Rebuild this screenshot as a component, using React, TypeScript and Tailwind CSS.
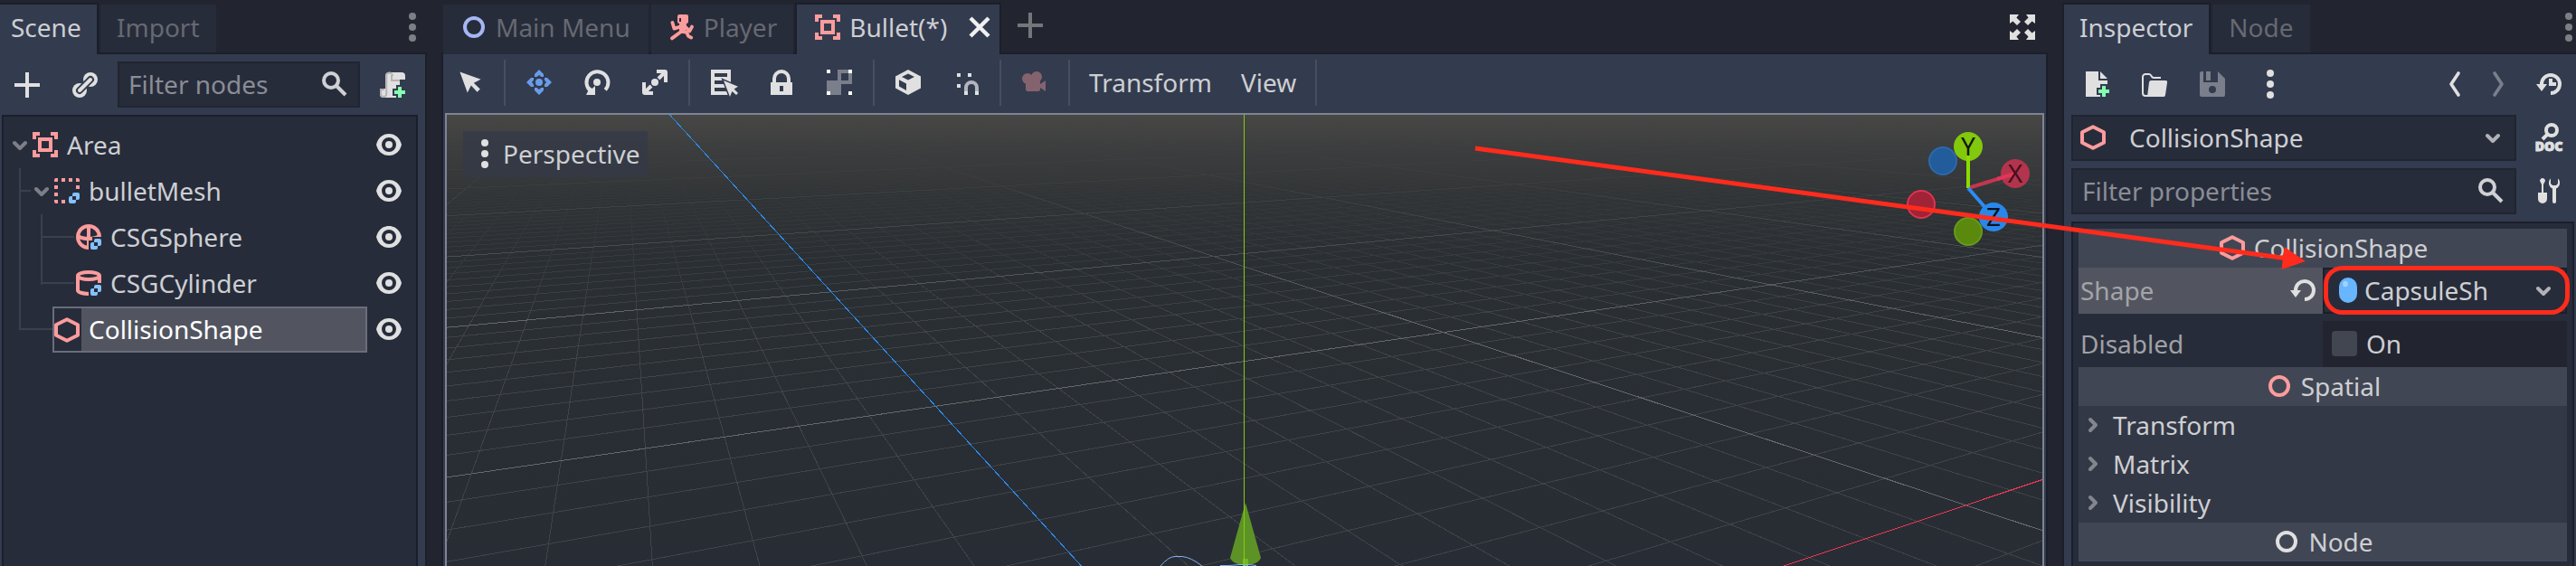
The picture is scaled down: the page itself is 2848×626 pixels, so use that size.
import type { ReactNode } from "react";

const LIGHT = "#e0e0e0";
const PINK = "#fc9c9c";
const BLUE = "#84c2ff";
const GREEN = "#84ffb1";

function Icon({ children, className = "" }: { children: ReactNode; className?: string }) {
  return (
    <svg viewBox="0 0 16 16" aria-hidden="true" className={`size-8 shrink-0 ${className}`}>
      {children}
    </svg>
  );
}

/* ---------- icons ---------- */

const AddIcon = ({ color = LIGHT }: { color?: string }) => (
  <Icon>
    <path d="M7 1v6H1v2h6v6h2V9h6V7H9V1z" fill={color} />
  </Icon>
);

const LinkIcon = () => (
  <Icon>
    <circle cx="11" cy="5" r="4" fill={LIGHT} />
    <circle cx="5" cy="11" r="4" fill={LIGHT} />
    <path d="M5 11l6-6" stroke="#333b4f" strokeWidth="4" strokeLinecap="round" />
    <path d="M5 11l6-6" stroke={LIGHT} strokeWidth="2" strokeLinecap="round" />
  </Icon>
);

const SearchIcon = () => (
  <Icon>
    <circle cx="6" cy="6" r="4" fill="none" stroke="#cfd0d3" strokeWidth="2" />
    <path d="M9 9l5 5" stroke="#cfd0d3" strokeWidth="2" />
  </Icon>
);

const PlusBadge = () => (
  <>
    <path d="M12 8v8M8 12h8" stroke="#333b4f" strokeWidth="4" />
    <path d="M12 9v6M9 12h6" stroke={GREEN} strokeWidth="2" />
  </>
);

const ScriptCreateIcon = () => (
  <Icon>
    <path d="M6 1h7a2 2 0 0 1 2 2v2h-3v10H3a2 2 0 0 1-2-2v-3h3V3a2 2 0 0 1 2-2z" fill={LIGHT} />
    <path
      d="M8 3a1.500 1.500 0 0 0-3.400 0v10a1.500 1.500 0 0 1-3.100 0v-2.500h2M7.500 2.500v3H12"
      fill="none"
      stroke="#b4b4b4"
      strokeWidth="1"
    />
    <PlusBadge />
  </Icon>
);

const EyeIcon = () => (
  <Icon>
    <path
      fillRule="evenodd"
      d="M8 2C4.400 2 1.900 4.400 1 8c.9 3.600 3.400 6 7 6s6.100-2.400 7-6c-.9-3.600-3.400-6-7-6zm0 2a4 4 0 1 1 0 8 4 4 0 0 1 0-8z"
      fill={LIGHT}
    />
    <circle cx="8" cy="8" r="2" fill={LIGHT} />
  </Icon>
);

const AreaIcon = () => (
  <Icon>
    <path
      d="M1 1v4h2V3h2V1zM11 1v2h2v2h2V1zM1 11v4h4v-2H3v-2zM13 11v2h-2v2h4v-4z"
      fill={PINK}
    />
    <path d="M5 5h6v6H5z" fill="none" stroke={PINK} strokeWidth="2" />
  </Icon>
);

const CsgBadge = () => (
  <>
    <path d="M10 8h6v8H8v-6h2z" fill="#272c3b" />
    <path
      fillRule="evenodd"
      d="M12 9a1 1 0 0 0-1 1v1h-1a1 1 0 0 0-1 1v2a1 1 0 0 0 1 1h2a1 1 0 0 0 1-1v-1h1a1 1 0 0 0 1-1v-2a1 1 0 0 0-1-1zm-1 2h2v2h-2z"
      fill={BLUE}
    />
  </>
);

const CombinerIcon = () => (
  <Icon>
    <path
      d="M2 1a1 1 0 0 0-1 1v1h2V1zM5 1h2v2H5zM9 1h2v2H9zM13 1v2h2V2a1 1 0 0 0-1-1zM1 5h2v2H1zM13 5h2v2h-2zM1 9h2v2H1zM1 13v1a1 1 0 0 0 1 1h1v-2zM5 13h2v2H5z"
      fill={PINK}
    />
    <CsgBadge />
  </Icon>
);

const SphereIcon = () => (
  <Icon>
    <g fill="none" stroke={PINK} strokeWidth="2">
      <circle cx="8" cy="8" r="6" />
      <path d="M8 2v12M2 7.500c3 2 9 2 12 0" />
    </g>
    <CsgBadge />
  </Icon>
);

const CylinderIcon = () => (
  <Icon>
    <g fill="none" stroke={PINK} strokeWidth="2">
      <ellipse cx="8" cy="4" rx="6" ry="2" />
      <path d="M2 4v8c0 1 2.500 2 6 2s6-1 6-2V4" />
    </g>
    <CsgBadge />
  </Icon>
);

const ShapeIcon = () => (
  <Icon>
    <path
      d="M8 2.150L14 5.100v5.800L8 13.850 2 10.900V5.100z"
      fill="none"
      stroke={PINK}
      strokeWidth="2"
      strokeLinejoin="round"
    />
  </Icon>
);

const RingIcon = ({ color }: { color: string }) => (
  <Icon>
    <circle cx="8" cy="8" r="5" fill="none" stroke={color} strokeWidth="2" />
  </Icon>
);

const RunnerIcon = () => (
  <Icon>
    <path
      fillRule="evenodd"
      d="M6.500 1h4a1 1 0 0 1 1 1v3a1 1 0 0 1-1 1h-4a1 1 0 0 1-1-1V2a1 1 0 0 1 1-1zm0 2v2h1V3z"
      fill={PINK}
    />
    <g stroke={PINK} strokeWidth="1.900" fill="none" strokeLinecap="round" strokeLinejoin="round">
      <path d="M2.700 5.500l1 3.300 3.300-1M9.500 7.500l2.700 2.700 1.300-2.400" />
      <path d="M7.500 10.500l-5 3.700M8.500 10.600l2 .2 1 2.100 1.600.9" />
    </g>
    <path d="M6.500 6h4l-.5 5-3.500.5z" fill={PINK} />
  </Icon>
);

const DotsIcon = ({ color = LIGHT }: { color?: string }) => (
  <Icon>
    <g fill={color}>
      <circle cx="8" cy="2" r="2" />
      <circle cx="8" cy="8" r="2" />
      <circle cx="8" cy="14" r="2" />
    </g>
  </Icon>
);

const ChevronDown = ({ color = "#7c7f88", className = "" }: { color?: string; className?: string }) => (
  <svg viewBox="4 0 8 16" aria-hidden="true" className={`h-8 w-4 shrink-0 ${className}`}>
    <path
      d="M5 7l3 3 3-3"
      fill="none"
      stroke={color}
      strokeWidth="2"
      strokeLinecap="round"
      strokeLinejoin="round"
    />
  </svg>
);

const ChevronRight = () => (
  <Icon>
    <path
      d="M6.500 5l3 3-3 3"
      fill="none"
      stroke="#83868e"
      strokeWidth="2"
      strokeLinecap="round"
      strokeLinejoin="round"
    />
  </Icon>
);

const SelectIcon = () => (
  <Icon>
    <path d="M2.200 2.200l4.200 11.600 2-4 3.400 3.600 1.600-1.600-3.500-3.400 3.900-2z" fill={LIGHT} />
  </Icon>
);

const MoveIcon = () => (
  <Icon>
    <g fill="#699ce8">
      <circle cx="8" cy="8" r="2" />
      <path d="M8 1L5.500 3.500V5h1.300L8 4l1.200 1h1.300V3.500zM8 15l-2.500-2.500V11h1.300L8 12l1.200-1h1.300v1.500zM1 8l2.500-2.500H5v1.300L4 8l1 1.200v1.300H3.500zM15 8l-2.500-2.500H11v1.300L12 8l-1 1.200v1.300h1.500z" />
    </g>
  </Icon>
);

const RotateIcon = () => (
  <Icon>
    <circle cx="8" cy="8" r="2" fill={LIGHT} />
    <path d="M12.600 12.200A6 6 0 1 0 4.500 12.800" fill="none" stroke={LIGHT} strokeWidth="2" />
    <path d="M2 15h5v-5l-1.700 1.500-2-1.500-.3 3z" fill={LIGHT} />
  </Icon>
);

const ScaleIcon = () => (
  <Icon>
    <circle cx="8" cy="8" r="2" fill={LIGHT} />
    <g fill="none" stroke={LIGHT} strokeWidth="2">
      <path d="M9 2h4.500a.5.5 0 0 1 .5.5V8M14 2l-4 4" />
      <path d="M7 14H2.500a.5.5 0 0 1-.5-.5V8M2 14l4-4" />
    </g>
  </Icon>
);

const ListSelectIcon = () => (
  <Icon>
    <path fillRule="evenodd" d="M1 1v14h11V1zm2 2h7v2H3zm0 4h7v2H3zm0 4h7v2H3z" fill={LIGHT} />
    <path
      d="M8 7l3.500 9 1.200-3 2.300 2 1-1-2.200-2.200L16 10.400z"
      fill={LIGHT}
      stroke="#333b4f"
      strokeWidth="1.500"
      paintOrder="stroke"
    />
  </Icon>
);

const LockIcon = () => (
  <Icon>
    <path d="M4 9V6a4 4 0 0 1 8 0v3" fill="none" stroke={LIGHT} strokeWidth="2" />
    <path fillRule="evenodd" d="M2 8h12v7H2zm5 2v3h2v-3z" fill={LIGHT} />
  </Icon>
);

const GroupIcon = () => (
  <Icon>
    <path fillRule="evenodd" d="M7 1h8v8H9v6H1V7h6zm2 2v4h4V3z" fill="#7b7f8b" />
    <path d="M1 1h2v2H1zM13 1h2v2h-2zM1 13h2v2H1zM13 13h2v2h-2z" fill="#fff" />
  </Icon>
);

const CubeIcon = () => (
  <Icon>
    <path
      fillRule="evenodd"
      d="M8 1l7 3.700v6.600L8 15l-7-3.700V4.700zm0 2.200L4.500 5 8 6.800 11.500 5zM3 6.600v3.700l4 2.200V8.700z"
      fill={LIGHT}
    />
  </Icon>
);

const SnapIcon = () => (
  <Icon>
    <path d="M3 3h2v2H3zM9 3h2v2H9zM3 9h2v2H3z" fill={LIGHT} />
    <path d="M8 13v-2a3 3 0 0 1 6 0v2" fill="none" stroke="#b3b6be" strokeWidth="2" />
    <path d="M7 13h2v2H7zM13 13h2v2h-2z" fill={LIGHT} />
  </Icon>
);

const CameraIcon = () => (
  <Icon>
    <g fill="#84636f">
      <circle cx="4" cy="6" r="3" />
      <circle cx="9" cy="5" r="3" />
      <path d="M3 6h8v3l3-2v6l-3-2v1a1 1 0 0 1-1 1H4a1 1 0 0 1-1-1z" />
    </g>
  </Icon>
);

const CloseIcon = () => (
  <Icon>
    <path d="M3 3l10 10M13 3L3 13" stroke="#f0f0f0" strokeWidth="2.200" />
  </Icon>
);

const ExpandIcon = () => (
  <Icon>
    <path
      d="M1 1h5L4.700 2.700 7 5 5 7 2.700 4.700 1 6zM15 1h-5l1.300 1.700L9 5l2 2 2.300-2.300L15 6zM1 15h5l-1.300-1.700L7 11 5 9l-2.300 2.300L1 10zM15 15h-5l1.300-1.700L9 11l2-2 2.300 2.300L15 10z"
      fill={LIGHT}
    />
  </Icon>
);

const NewFileIcon = () => (
  <Icon>
    <path d="M2 1v14h12V6H9V1zM10 1v4h4z" fill={LIGHT} />
    <PlusBadge />
  </Icon>
);

const FolderIcon = () => (
  <Icon>
    <path
      d="M4.500 14.500H3A1.500 1.500 0 0 1 1.500 13V4A1.500 1.500 0 0 1 3 2.500h2c1.500 0 1 2 2.500 2h4"
      fill="none"
      stroke={LIGHT}
      strokeWidth="1"
    />
    <path d="M6.200 6H14a1 1 0 0 1 1 1.200L14 14a1 1 0 0 1-1 1H4l1-8a1.200 1.200 0 0 1 1.200-1z" fill={LIGHT} />
  </Icon>
);

const SaveIcon = () => (
  <Icon>
    <path
      fillRule="evenodd"
      d="M2 1h1v6h8V1l4 4v9a1 1 0 0 1-1 1H2a1 1 0 0 1-1-1V2a1 1 0 0 1 1-1zm6 8a2 2 0 1 0 0 4 2 2 0 0 0 0-4z"
      fill="#7b7f8b"
    />
    <path d="M4.500 1H7v5H4.500z" fill="#7b7f8b" />
  </Icon>
);

const AngleIcon = ({ flip = false }: { flip?: boolean }) => (
  <Icon className={flip ? "-scale-x-100" : ""}>
    <path
      d="M10 2L6 8l4 6"
      fill="none"
      stroke={flip ? "#7b7f8b" : LIGHT}
      strokeWidth="1.800"
      strokeLinecap="round"
      strokeLinejoin="round"
    />
  </Icon>
);

const RevertIcon = ({ hands = false }: { hands?: boolean }) => (
  <Icon>
    <path d="M4 8a5 5 0 1 1 5 5" fill="none" stroke={LIGHT} strokeWidth="2" />
    <path d="M1 8h6l-3 4z" fill={LIGHT} />
    {hands && <path d="M9 5v3h3" fill="none" stroke={LIGHT} strokeWidth="2" />}
  </Icon>
);

const DocIcon = () => (
  <Icon className="overflow-visible">
    <circle cx="9.500" cy="4" r="3" fill="none" stroke={LIGHT} strokeWidth="2" />
    <path d="M7.300 6.200L4.500 9" stroke={LIGHT} strokeWidth="2" />
    <text
      x="8"
      y="15.600"
      textAnchor="middle"
      fontFamily="Open Sans, sans-serif"
      fontWeight="800"
      fontSize="7"
      fill={LIGHT}
      stroke={LIGHT}
      strokeWidth="0.500"
    >
      DOC
    </text>
  </Icon>
);

const ToolsIcon = () => (
  <Icon>
    <g fill={LIGHT}>
      <path d="M4.500 1C3.700 1 3 1.800 3 2.500l1 2V9H2v3.500a2.500 2.500 0 0 0 5 0V9H5V4.500l1-2C6 1.800 5.300 1 4.500 1z" />
      <path d="M9 1.300C8 2.200 8 3 8 4c0 1.200.9 2.300 2 2.800V14a1 1 0 0 0 2 0V6.800c1.100-.5 2-1.600 2-2.800s0-1.800-1-2.700V4l-1 1h-2L9 4z" />
    </g>
  </Icon>
);

const CapsuleIcon = () => (
  <Icon>
    <rect x="3" y="1" width="10" height="14" rx="5" fill="#68b6ff" />
    <ellipse cx="6.500" cy="4.500" rx="1.400" ry="1.600" fill="#a2d2ff" />
  </Icon>
);

/* ---------- shared pieces ---------- */

function Tab({ label, active = false, className = "" }: { label: string; active?: boolean; className?: string }) {
  return (
    <button
      type="button"
      role="tab"
      aria-selected={active}
      className={`flex items-center ${
        active
          ? "h-[57px] border-t-2 border-r-2 border-[#1b1f2a] bg-[#333b4f] pr-[18px] pb-[6px] text-[#cdcfd2]"
          : "h-[53px] bg-[#272c3b] px-[18px] pb-1 text-[#666970]"
      } ${className}`}
    >
      {label}
    </button>
  );
}

function ToolButton({ label, children }: { label: string; children: ReactNode }) {
  return (
    <button type="button" aria-label={label} className="flex w-[60px] shrink-0 items-center justify-center">
      {children}
    </button>
  );
}

function Separator() {
  return <span className="mx-[3px] h-[51px] w-[2px] shrink-0 bg-[#474e60]" />;
}

/* ---------- scene dock ---------- */

type TreeNode = { name: string; icon: ReactNode; indent: string; open?: boolean; selected?: boolean };

const NODES: TreeNode[] = [
  { name: "Area", icon: <AreaIcon />, indent: "pl-[10px]", open: true },
  { name: "bulletMesh", icon: <CombinerIcon />, indent: "pl-[34px]", open: true },
  { name: "CSGSphere", icon: <SphereIcon />, indent: "pl-[78px]" },
  { name: "CSGCylinder", icon: <CylinderIcon />, indent: "pl-[78px]" },
  { name: "CollisionShape", icon: <ShapeIcon />, indent: "pl-[54px]", selected: true },
];

function SceneDock() {
  return (
    <section aria-label="Scene" className="flex w-[472px] shrink-0 flex-col">
      <div role="tablist" className="flex h-[60px] items-end">
        <Tab label="Scene" active className="w-[109px] pl-3" />
        <Tab label="Import" className="mb-[2px] ml-[2px]" />
        <span className="h-[2px] flex-1" />
        <button type="button" aria-label="Dock options" className="mb-[14px]">
          <DotsIcon color="#7d7f85" />
        </button>
      </div>
      <div className="-mt-[2px] ml-[107px] h-[2px] bg-[#1b1f2a]" />
      <div className="flex flex-1 flex-col border-r-2 border-[#1b1f2a] bg-[#333b4f] pt-2">
        <div className="flex h-[51px] items-center pl-[14px]">
          <button type="button" aria-label="Add node">
            <AddIcon />
          </button>
          <button type="button" aria-label="Instance scene" className="ml-8">
            <LinkIcon />
          </button>
          <label className="ml-5 flex h-[51px] w-[268px] items-center border-2 border-[#212530] bg-[#272c3b] px-[10px] pb-px">
            <input
              aria-label="Filter nodes"
              placeholder="Filter nodes"
              className="min-w-0 flex-1 bg-transparent placeholder:text-[#8a8d95] focus:outline-none"
            />
            <SearchIcon />
          </label>
          <button type="button" aria-label="Attach script" className="ml-5">
            <ScriptCreateIcon />
          </button>
        </div>
        <ul className="relative mt-2 mr-2 ml-[2px] flex-1 border-2 border-b-0 border-[#1b1f2a] bg-[#272c3b] pt-[6px]">
          <svg aria-hidden="true" className="absolute top-0 left-0 h-64 w-24">
            <path
              d="M18 57v179M18 82h12M18 235h36M42 108v78M42 133h36M42 184h36"
              fill="none"
              stroke="#3b4050"
              strokeWidth="2"
            />
          </svg>
          {NODES.map((node) => (
            <li key={node.name} className="relative flex h-[51px] items-center">
              {node.selected ? (
                <button
                  type="button"
                  className="ml-[54px] flex h-[51px] flex-1 items-center text-left text-white outline-2 -outline-offset-2 outline-[#696d7c]"
                >
                  {node.icon}
                  <span className="flex h-full flex-1 items-center bg-[#525560] pb-px pl-2">{node.name}</span>
                </button>
              ) : (
                <button
                  type="button"
                  className={`flex flex-1 items-center gap-[2px] pb-px text-left text-[#cdcfd2] ${node.indent}`}
                >
                  {node.open && <ChevronDown className="mr-[2px]" />}
                  {node.icon}
                  <span className="ml-[6px]">{node.name}</span>
                </button>
              )}
              <button type="button" aria-label={`Toggle ${node.name}`} className="mr-[14px] ml-2 pb-px">
                <EyeIcon />
              </button>
            </li>
          ))}
        </ul>
      </div>
    </section>
  );
}

/* ---------- viewport ---------- */

/* Projects ground-plane coordinates (in tens of units) to scene pixels. */
function project(u: number, v: number): [number, number] {
  const w = 0.5435 * u + 0.98 * v + 1;
  return [(1978.4 * u + 673.4 * v + 1375.5) / w, (38.2 * u + 65.6 * v + 824) / w];
}

function segment(u1: number, v1: number, u2: number, v2: number) {
  const [x1, y1] = project(u1, v1);
  const [x2, y2] = project(u2, v2);
  return `M${x1.toFixed(1)} ${y1.toFixed(1)}L${x2.toFixed(1)} ${y2.toFixed(1)}`;
}

function buildGrid() {
  const minor: string[] = [];
  const major: string[] = [];
  for (let i = -60; i <= 100; i++) {
    if (i === 0) continue;
    const k = i / 10;
    const bucket = i % 10 === 0 ? major : minor;
    const vStart = Math.max(-1, (0.2 - 1 - 0.5435 * k) / 0.98);
    const uStart = Math.max(-9, (0.2 - 1 - 0.98 * k) / 0.5435);
    bucket.push(segment(k, vStart, k, 12));
    bucket.push(segment(uStart, k, 14, k));
  }
  return { minor: minor.join(""), major: major.join("") };
}

const GRID = buildGrid();

function GroundGrid() {
  return (
    <svg
      aria-hidden="true"
      viewBox="494 127 1764 499"
      preserveAspectRatio="xMidYMin slice"
      className="absolute inset-0 h-full w-full"
    >
      <defs>
        <linearGradient id="sky" x1="0" y1="127" x2="0" y2="626" gradientUnits="userSpaceOnUse">
          <stop offset="0" stopColor="#474745" />
          <stop offset="0.080" stopColor="#3c3d3e" />
          <stop offset="0.180" stopColor="#313436" />
          <stop offset="0.320" stopColor="#2a2f33" />
          <stop offset="1" stopColor="#282d35" />
        </linearGradient>
        <linearGradient id="fade" x1="0" y1="127" x2="0" y2="626" gradientUnits="userSpaceOnUse">
          <stop offset="0.060" stopColor="#000" />
          <stop offset="0.160" stopColor="#2a2a2a" />
          <stop offset="0.300" stopColor="#858585" />
          <stop offset="0.460" stopColor="#fff" />
        </linearGradient>
        <mask id="horizon" maskUnits="userSpaceOnUse" x="494" y="127" width="1764" height="499">
          <rect x="494" y="127" width="1764" height="499" fill="url(#fade)" />
        </mask>
      </defs>
      <rect x="494" y="127" width="1764" height="499" fill="url(#sky)" />
      <g mask="url(#horizon)" fill="none" shapeRendering="crispEdges">
        <path d={GRID.minor} stroke="#404347" />
        <path d={GRID.major} stroke="#66686a" />
      </g>
      <g fill="none" shapeRendering="crispEdges">
        <path d="M740.500 127L1195.500 626" stroke="#2c8cf0" />
        <path d="M1972 626L2258 530.500" stroke="#ef3653" />
        <path d="M1375.500 127V626" stroke="#86cb0f" />
      </g>
      <path d="M1377 556l17 61q-2 5-9 7h-16q-7-2-9-7z" fill="#5d9326" />
      <path d="M1374 618h6v8h-6z" fill="#73b52b" />
      <path d="M1375.500 556V626" stroke="#86cb0f" />
      <path
        d="M1283 626q9-10.500 16-10.500h8q10 1 22 10.500M1349 625.500h10l12-1h10l8 1"
        fill="none"
        stroke="#7fb2f5"
      />
    </svg>
  );
}

function AxisGizmo() {
  return (
    <svg aria-hidden="true" viewBox="2098 127 160 160" className="absolute top-0 right-0 size-40">
      <circle cx="2148" cy="178" r="15" fill="#225c9b" stroke="#2c69ae" strokeWidth="2" />
      <path d="M2176 208l52-16" stroke="#c4364f" strokeWidth="4" />
      <circle cx="2228" cy="192" r="16" fill="#b3344c" />
      <path d="M2208 198l20-6" stroke="#e0365a" strokeWidth="4" />
      <circle cx="2124" cy="226" r="15" fill="#a02337" stroke="#df3351" strokeWidth="2" />
      <circle cx="2176" cy="256" r="15" fill="#5a890e" stroke="#669b1b" strokeWidth="2" />
      <circle cx="2176" cy="162" r="16" fill="#82c80c" />
      <path d="M2176 162v46" stroke="#8bdc00" strokeWidth="4" />
      <path d="M2176 208l28 32" stroke="#2b8cf2" strokeWidth="4" />
      <circle cx="2204" cy="240" r="16" fill="#2a87ea" />
      <g fontFamily="Noto Sans, sans-serif" fontSize="28" textAnchor="middle">
        <text x="2176" y="172" fill="#10180a">Y</text>
        <text x="2228" y="202" fill="#43101c">X</text>
        <text x="2204" y="250" fill="#08121f">Z</text>
      </g>
    </svg>
  );
}

function Workspace() {
  return (
    <main className="flex min-w-0 flex-1 flex-col">
      <div role="tablist" className="relative z-10 flex h-[60px] items-end pl-[2px]">
        <button type="button" role="tab" className="mr-[3px] flex h-[55px] items-center bg-[#272c3b] pr-5 pb-[5px] pl-[18px] text-[#666970]">
          <RingIcon color="#a5b7f3" />
          <span className="ml-2">Main Menu</span>
        </button>
        <button type="button" role="tab" className="mr-[2px] flex h-[55px] items-center bg-[#272c3b] pr-[18px] pb-[5px] pl-[18px] text-[#666970]">
          <RunnerIcon />
          <span className="ml-2">Player</span>
        </button>
        <div className="flex h-[57px] items-center border-2 border-b-0 border-[#1b1f2a] bg-[#333b4f] pr-[6px] pb-[5px] pl-[18px] text-[#cdcfd2]">
          <button type="button" role="tab" aria-selected="true" className="flex items-center">
            <AreaIcon />
            <span className="ml-2">Bullet(*)</span>
          </button>
          <button type="button" aria-label="Close tab" className="ml-5">
            <CloseIcon />
          </button>
        </div>
        <button type="button" aria-label="New tab" className="mb-4 ml-4">
          <AddIcon color="#74777a" />
        </button>
        <button type="button" aria-label="Expand" className="mr-3 mb-[14px] ml-auto">
          <ExpandIcon />
        </button>
      </div>
      <div className="-mt-[2px] h-[2px] bg-[#1b1f2a]" />
      <div className="flex flex-1 flex-col border-x-2 border-[#1b1f2a] bg-[#333b4f]">
        <div className="flex h-[65px] items-center gap-1 pb-[3px] text-[#cdcfd2]">
          <ToolButton label="Select"><SelectIcon /></ToolButton>
          <Separator />
          <ToolButton label="Move"><MoveIcon /></ToolButton>
          <ToolButton label="Rotate"><RotateIcon /></ToolButton>
          <ToolButton label="Scale"><ScaleIcon /></ToolButton>
          <Separator />
          <ToolButton label="List select"><ListSelectIcon /></ToolButton>
          <ToolButton label="Lock"><LockIcon /></ToolButton>
          <ToolButton label="Group"><GroupIcon /></ToolButton>
          <Separator />
          <ToolButton label="Local space"><CubeIcon /></ToolButton>
          <ToolButton label="Snap"><SnapIcon /></ToolButton>
          <Separator />
          <ToolButton label="Camera override"><CameraIcon /></ToolButton>
          <Separator />
          <button type="button" className="px-[14px]">Transform</button>
          <button type="button" className="px-[14px]">View</button>
          <Separator />
        </div>
        <div className="relative mx-[2px] flex-1 overflow-hidden border-2 border-b-0 border-[#7f8494]">
          <GroundGrid />
          <button
            type="button"
            className="relative mt-[18px] ml-[18px] flex h-[51px] items-center bg-[#343947]/80 px-2 pb-px text-[#cdcfd2]"
          >
            <DotsIcon />
            <span className="ml-1">Perspective</span>
          </button>
          <AxisGizmo />
        </div>
      </div>
    </main>
  );
}

/* ---------- inspector dock ---------- */

function InspectorButton({ label, children }: { label: string; children: ReactNode }) {
  return (
    <button type="button" aria-label={label} className="flex h-[51px] w-14 shrink-0 items-center justify-center pb-px">
      {children}
    </button>
  );
}

function SectionHeader({ icon, label }: { icon: ReactNode; label: string }) {
  return (
    <h2 className="flex h-[43px] items-center justify-center gap-2 bg-[#414654] pb-px text-[#cdcfd2]">
      {icon}
      {label}
    </h2>
  );
}

function InspectorDock() {
  return (
    <section aria-label="Inspector" className="flex w-[568px] shrink-0 flex-col">
      <div role="tablist" className="flex h-[60px] items-end">
        <Tab label="Inspector" active className="border-l-2 pl-[17px]" />
        <Tab label="Node" className="mb-[2px] ml-[2px]" />
        <button type="button" aria-label="Dock options" className="mb-[14px] -mr-2 ml-auto">
          <DotsIcon color="#7d7f85" />
        </button>
      </div>
      <div className="-mt-[2px] ml-[163px] h-[2px] bg-[#1b1f2a]" />
      <div className="flex flex-1 flex-col border-l-2 border-[#1b1f2a] bg-[#333b4f] pt-2 pr-[2px] pl-2">
        <div className="flex items-center gap-2">
          <InspectorButton label="New resource"><NewFileIcon /></InspectorButton>
          <InspectorButton label="Load resource"><FolderIcon /></InspectorButton>
          <InspectorButton label="Save resource"><SaveIcon /></InspectorButton>
          <InspectorButton label="More options"><DotsIcon /></InspectorButton>
          <span className="flex-1" />
          <div className="flex gap-4 pr-1 pb-px">
            <button type="button" aria-label="Back"><AngleIcon /></button>
            <button type="button" aria-label="Forward"><AngleIcon flip /></button>
          </div>
          <InspectorButton label="History"><RevertIcon hands /></InspectorButton>
        </div>
        <div className="mt-2 flex gap-2">
          <label className="relative flex h-[51px] min-w-0 flex-1 items-center border-2 border-[#212530] bg-[#272c3b] pb-px pl-[6px]">
            <ShapeIcon />
            <select
              aria-label="Edited object"
              className="flex-1 appearance-none bg-transparent pl-6 text-[#cdcfd2]"
            >
              <option>CollisionShape</option>
            </select>
            <ChevronDown color="#b0b2b6" className="pointer-events-none absolute right-4" />
          </label>
          <InspectorButton label="Open documentation"><DocIcon /></InspectorButton>
        </div>
        <div className="mt-2 flex gap-2">
          <label className="flex h-[51px] min-w-0 flex-1 items-center border-2 border-[#212530] bg-[#272c3b] px-[10px] pb-px">
            <input
              aria-label="Filter properties"
              placeholder="Filter properties"
              className="min-w-0 flex-1 bg-transparent placeholder:text-[#8a8d95] focus:outline-none"
            />
            <SearchIcon />
          </label>
          <InspectorButton label="Object tools"><ToolsIcon /></InspectorButton>
        </div>
        <div className="mt-2 flex-1 border-2 border-b-0 border-[#1b1f2a] bg-[#272c3b] px-[6px] pt-[6px]">
          <SectionHeader icon={<ShapeIcon />} label="CollisionShape" />
          <div className="flex h-[51px]">
            <div className="flex w-1/2 items-center justify-between bg-[#525560] pr-[6px] pb-px pl-[2px] text-[#a3a4a7]">
              <label htmlFor="shape">Shape</label>
              <button type="button" aria-label="Revert shape"><RevertIcon /></button>
            </div>
            <div className="relative flex w-1/2 items-center border-2 border-[#1b1f2a] pb-px pl-[10px]">
              <CapsuleIcon />
              <select
                id="shape"
                className="flex-1 appearance-none bg-transparent pl-[2px] text-[#cdcfd2]"
              >
                <option>CapsuleSh</option>
              </select>
              <ChevronDown color="#b0b2b6" className="pointer-events-none absolute right-4" />
            </div>
          </div>
          <div className="mt-2 flex h-[51px]">
            <span className="flex w-1/2 items-center pb-px pl-[2px] text-[#a0a1a4]">Disabled</span>
            <label className="flex w-1/2 items-center bg-[#222530] pb-px pl-[10px] text-[#cdcfd2]">
              <input type="checkbox" className="mr-[10px] size-7 appearance-none rounded bg-[#424650]" />
              On
            </label>
          </div>
          <SectionHeader icon={<RingIcon color={PINK} />} label="Spatial" />
          {["Transform", "Matrix", "Visibility"].map((name) => (
            <button
              key={name}
              type="button"
              className="flex h-[43px] w-full items-center gap-[6px] bg-[#333846] pb-px text-left text-[#cdcfd2]"
            >
              <ChevronRight />
              {name}
            </button>
          ))}
          <SectionHeader icon={<RingIcon color={LIGHT} />} label="Node" />
        </div>
      </div>
    </section>
  );
}

/* Tutorial callout: arrow leading to the outlined shape field. */
function Callout() {
  return (
    <svg
      aria-hidden="true"
      viewBox="0 0 2848 626"
      preserveAspectRatio="xMaxYMin meet"
      className="pointer-events-none absolute inset-0 z-20 h-full w-full"
    >
      <path d="M1631 164L2526 285.500" stroke="#ff2b1c" strokeWidth="5" />
      <path d="M2525.500 273L2549 289l-26.500 9z" fill="#ff2b1c" />
      <rect x="2571.500" y="296.500" width="267" height="49" rx="18" fill="none" stroke="#ff2b1c" strokeWidth="5" />
    </svg>
  );
}

export default function App() {
  return (
    <div className="relative flex min-h-screen gap-4 overflow-hidden bg-[#222530] font-['Noto_Sans',sans-serif] text-[28px] leading-[38px]">
      <SceneDock />
      <Workspace />
      <InspectorDock />
      <Callout />
    </div>
  );
}
